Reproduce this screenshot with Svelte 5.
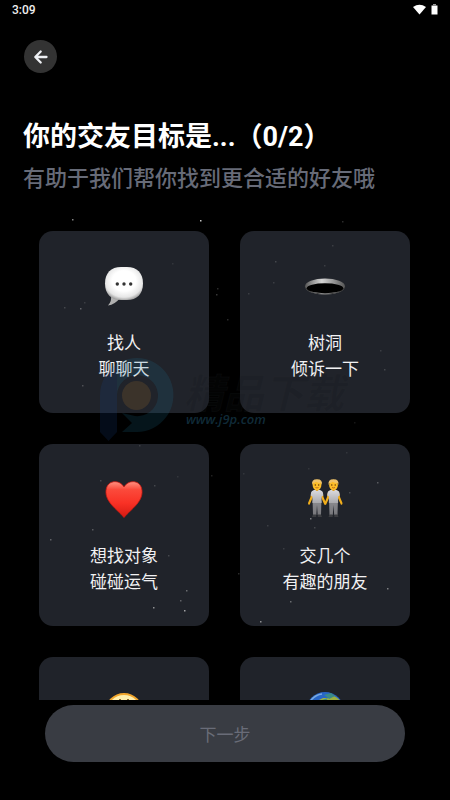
<script>
  const goals = [
    { id: 'chat', lines: ['找人', '聊聊天'] },
    { id: 'hole', lines: ['树洞', '倾诉一下'] },
    { id: 'heart', lines: ['想找对象', '碰碰运气'] },
    { id: 'friends', lines: ['交几个', '有趣的朋友'] },
    { id: 'smile', lines: [] },
    { id: 'globe', lines: [] }
  ];

  // x, y, opacity
  const stars = [
    [72, 219, 0.6], [200, 220, 0.9], [342, 221, 0.2], [332, 245, 0.15], [275, 261, 0.2],
    [324, 265, 0.15], [172, 263, 0.1], [273, 282, 0.15], [217, 288, 0.2], [216, 294, 0.25],
    [248, 293, 0.15], [64, 307, 0.2], [80, 308, 0.35], [84, 302, 0.15], [227, 319, 0.2],
    [380, 350, 0.15], [384, 369, 0.2], [82, 385, 0.25], [354, 422, 0.1], [139, 445, 0.15],
    [100, 480, 0.2], [154, 485, 0.2], [177, 476, 0.1], [211, 475, 0.15], [243, 473, 0.1],
    [346, 452, 0.1], [308, 468, 0.1], [377, 482, 0.3], [349, 492, 0.2], [50, 539, 0.35],
    [92, 529, 0.3], [310, 518, 0.5], [314, 527, 0.2], [267, 525, 0.15], [283, 548, 0.15],
    [168, 555, 0.2], [238, 573, 0.2], [186, 590, 0.4], [180, 600, 0.35], [153, 607, 0.6],
    [184, 610, 0.7], [290, 601, 0.4], [387, 588, 0.5], [260, 621, 0.6]
  ];

  let chosen = $state([]);

  function toggle(id) {
    if (chosen.includes(id)) chosen = chosen.filter((g) => g !== id);
    else if (chosen.length < 2) chosen = [...chosen, id];
  }
</script>

{#snippet person()}
  <path d="M-4.500 12 Q-6 14-6.500 18 L-9 24 Q-9 26.500-7.300 25.500 L-4 18Z M4.500 12 Q6 14 6.500 18 L9 24 Q9 26.500 7.300 25.500 L4 18Z" fill="#f2ae1c" />
  <path d="M-4.400 22 H4.400 L4 36 H.7 L0 26 L-.7 36 H-4Z" fill="url(#trousers)" />
  <path d="M-2 10.800 H2 Q5.500 11.500 6 14 L6.300 16.500 L4.600 17.500 V24 H-4.600 V17.500 L-6.300 16.500 L-6 14 Q-5.500 11.500-2 10.800Z" fill="url(#shirt)" />
  <path d="M-1.500 9 H1.500 V11 Q0 13-1.500 11Z" fill="#d9920f" />
  <ellipse cy="6" rx="4.400" ry="5.200" fill="#fcbd28" />
  <path d="M-4.800 6 Q-6 .3 0 .3 Q6 .3 4.800 6 L3.900 4 Q1 4-1 2.800 Q-2 4-3.900 4Z" fill="#efc36a" />
  <circle cx="-1.700" cy="6" r=".7" fill="#5b3205" />
  <circle cx="1.700" cy="6" r=".7" fill="#5b3205" />
  <path d="M-1.500 8.500 Q0 9.400 1.500 8.500" fill="none" stroke="#a44d12" stroke-width=".7" />
  <path d="M-4 35.500 H-.8 V38 H-5Z M4 35.500 H.8 V38 H5Z" fill="#3b3c40" />
{/snippet}

<main class="screen">
  <header class="status">
    <span>3:09</span>
    <svg width="26" height="12" viewBox="0 0 26 12" aria-hidden="true">
      <path d="M0 3 Q6.500-1.500 13 3 L6.500 10.500Z" fill="#fff" />
      <path d="M18.500 1.500 H24.500 V10.500 H18.500Z" fill="#fff" />
      <path d="M20 0 H23 V1.500 H20Z" fill="#999" />
    </svg>
  </header>

  <nav class="top">
    <button class="back" aria-label="返回">
      <svg width="16" height="16" viewBox="0 0 16 16" fill="none" stroke="#eef0f4" stroke-width="2.300" stroke-linecap="round" stroke-linejoin="round">
        <path d="M7.700 2.500 L2.300 8 L7.700 13.500 M2.600 8 H13.500" />
      </svg>
    </button>
  </nav>

  <section class="intro">
    <h1>你的交友目标是...（{chosen.length}/2）</h1>
    <p>有助于我们帮你找到更合适的好友哦</p>
  </section>

  <div class="goals">
    {#each goals as goal (goal.id)}
      <button class="card" aria-pressed={chosen.includes(goal.id)} aria-label={goal.lines.join('') || goal.id} onclick={() => toggle(goal.id)}>
        <svg class="emoji" width="42" height="42" viewBox="0 0 42 42" aria-hidden="true">
          {#if goal.id === 'chat'}
            <defs>
              <radialGradient id="bubble" cx=".5" cy=".42" r=".62">
                <stop offset=".5" stop-color="#fff" />
                <stop offset=".8" stop-color="#e6e6e6" />
                <stop offset="1" stop-color="#8f8f8f" />
              </radialGradient>
            </defs>
            <path d="M8 30 Q9 35 5 39.500 Q12 38.500 17 32Z" fill="#b0b0b0" />
            <path d="M18 1 H24 C34 1 40 7 40 17.500 C40 28 34 34 24 34 H18 C8 34 2 28 2 17.500 C2 7 8 1 18 1Z" fill="url(#bubble)" />
            <circle cx="14.300" cy="18" r="1.700" fill="#333" />
            <circle cx="21" cy="18" r="1.700" fill="#333" />
            <circle cx="27.700" cy="18" r="1.700" fill="#333" />
          {:else if goal.id === 'hole'}
            <defs>
              <linearGradient id="rim">
                <stop stop-color="#555" />
                <stop offset=".2" stop-color="#999" />
                <stop offset=".42" stop-color="#d5d5d5" />
                <stop offset=".7" stop-color="#999" />
                <stop offset="1" stop-color="#555" />
              </linearGradient>
            </defs>
            <ellipse cx="21" cy="20.500" rx="20" ry="8" fill="url(#rim)" />
            <path d="M1 20.500 A20 8 0 0 0 41 20.500 Q38 27.500 21 27.500 Q4 27.500 1 20.500Z" fill="#3a3a3a" />
            <ellipse cx="21" cy="22.300" rx="18.300" ry="5" fill="#000" />
          {:else if goal.id === 'heart'}
            <defs>
              <linearGradient id="red" x2="0" y2="1">
                <stop stop-color="#ff9282" />
                <stop offset=".22" stop-color="#fb4a3b" />
                <stop offset=".6" stop-color="#f93125" />
                <stop offset="1" stop-color="#d41a12" />
              </linearGradient>
            </defs>
            <path d="M21 8 C17 1 6 .5 3.500 9 C0 22 14 30 21 38.500 C28 30 42 22 38.500 9 C36 .5 25 1 21 8Z" fill="url(#red)" stroke="#cf1b12" stroke-width=".8" />
          {:else if goal.id === 'friends'}
            <defs>
              <linearGradient id="shirt" x2="0" y2="1">
                <stop stop-color="#dcdce0" />
                <stop offset="1" stop-color="#a9a9ad" />
              </linearGradient>
              <linearGradient id="trousers" x2="0" y2="1">
                <stop stop-color="#8a8a8f" />
                <stop offset="1" stop-color="#77777b" />
              </linearGradient>
            </defs>
            <g transform="translate(13 0)">{@render person()}</g>
            <g transform="translate(29.500 0)">{@render person()}</g>
          {:else if goal.id === 'smile'}
            <circle cx="21" cy="20" r="18" fill="#ffefad" stroke="#f1a52b" stroke-width="2" />
            <path d="M17 7 v3 M25 7 v3" stroke="#70430b" stroke-width="1.500" />
            <path d="M11 22 Q21 36 31 22Z" fill="#70430b" />
          {:else}
            <circle cx="21" cy="19" r="19" fill="#2866c7" />
            <path d="M13 9 L19 6 L24 6 L30 4 Q40 9 40 20 L33 28 L28 19 L20 17 L15 20 L12 14Z" fill="#9cae3f" />
            <path d="M20 3 L27 1 L31 4 L25 7 L23 5Z M15 9 L24 6 L21 10Z" fill="#3c8b86" />
            <path d="M5 11 Q10 3 18 2" fill="none" stroke="#79a9df" stroke-width="1.500" />
          {/if}
        </svg>
        {#if goal.lines.length}
          <span class="label">
            {#each goal.lines as line}<span>{line}</span>{/each}
          </span>
        {/if}
      </button>
    {/each}
  </div>

  <footer>
    <button class="next" disabled={chosen.length === 0}>下一步</button>
  </footer>

  <svg class="overlay" width="450" height="800" viewBox="0 0 450 800" aria-hidden="true">
    {#each stars as [x, y, o]}
      <rect x={x} y={y} width="1.500" height="1.500" fill="#d9d9d9" opacity={o} />
    {/each}
    <path d="M100 396 A36.500 37 0 0 1 117 364 V432 L108.500 441 L100 432Z" fill="#164b9a" opacity=".16" />
    <path d="M117 364 A36.500 37 0 1 1 137 432 H122 L132 423 L122 413 L135 416 A20.500 20.500 0 1 0 117 395Z" fill="#1d7294" opacity=".18" />
    <circle cx="136.500" cy="395.500" r="14.500" fill="#a8722c" opacity=".2" />
    <text class="brand" x="184" y="408">精品下载</text>
    <text class="site" x="186" y="424">www.j9p.com</text>
  </svg>
</main>

<style>
  :global(body) {
    margin: 0;
    background: #000;
  }

  .screen {
    position: relative;
    display: flex;
    flex-direction: column;
    height: 100vh;
    overflow: hidden;
    background: #000;
    color: #fff;
    font-family: Roboto, 'Noto Sans CJK SC', sans-serif;
  }

  button {
    margin: 0;
    padding: 0;
    border: 0;
    font: inherit;
    color: inherit;
    cursor: pointer;
  }

  .status {
    display: flex;
    flex: none;
    align-items: center;
    justify-content: space-between;
    height: 20px;
    padding: 0 11px 0 12px;
    font-size: 12px;
    font-weight: 500;
    color: #eee;
  }

  .top {
    display: flex;
    flex: none;
    padding: 20px 24px 0;
  }

  .back {
    display: flex;
    align-items: center;
    justify-content: center;
    width: 33px;
    height: 33px;
    border-radius: 50%;
    background: #333;
  }

  .intro {
    flex: none;
    padding: 44px 23px 22px;
  }

  h1 {
    margin: 0;
    font-size: 27px;
    line-height: 40px;
    font-weight: 700;
    white-space: nowrap;
  }

  .intro p {
    margin: 4px 0 0;
    font-size: 22px;
    line-height: 36px;
    font-weight: 500;
    color: #676b78;
  }

  .goals {
    display: grid;
    flex: 1;
    grid-template-columns: 1fr 1fr;
    grid-auto-rows: min-content;
    gap: 31px;
    min-height: 0;
    padding: 12px 40px 0 39px;
    overflow-y: auto;
    scrollbar-width: none;
  }

  .card {
    display: flex;
    flex-direction: column;
    align-items: center;
    gap: 22px;
    min-height: 182px;
    padding: 35px 8px 31px;
    box-sizing: border-box;
    border-radius: 14px;
    background: #20232a;
  }

  .card[aria-pressed='true'] {
    background: #3a3e46;
  }

  .emoji {
    flex: none;
  }

  .label {
    display: flex;
    flex-direction: column;
    align-items: center;
    font-size: 17px;
    line-height: 26px;
    color: #f1f1f3;
  }

  footer {
    flex: none;
    padding: 5px 45px 38px;
  }

  .next {
    display: block;
    width: 100%;
    height: 57px;
    border-radius: 29px;
    background: #393c43;
    font-size: 17px;
    color: #696c78;
  }

  .overlay {
    position: absolute;
    top: 0;
    left: 0;
    pointer-events: none;
  }

  .brand {
    font-family: 'Noto Sans CJK SC', sans-serif;
    font-size: 40px;
    font-weight: 700;
    font-style: italic;
    fill: #15171a;
    fill-opacity: 0.2;
    stroke: #303236;
    stroke-opacity: 0.15;
  }

  .site {
    font-family: 'Open Sans', sans-serif;
    font-size: 13px;
    font-weight: 600;
    font-style: italic;
    fill: #12303f;
    fill-opacity: 0.9;
  }
</style>
